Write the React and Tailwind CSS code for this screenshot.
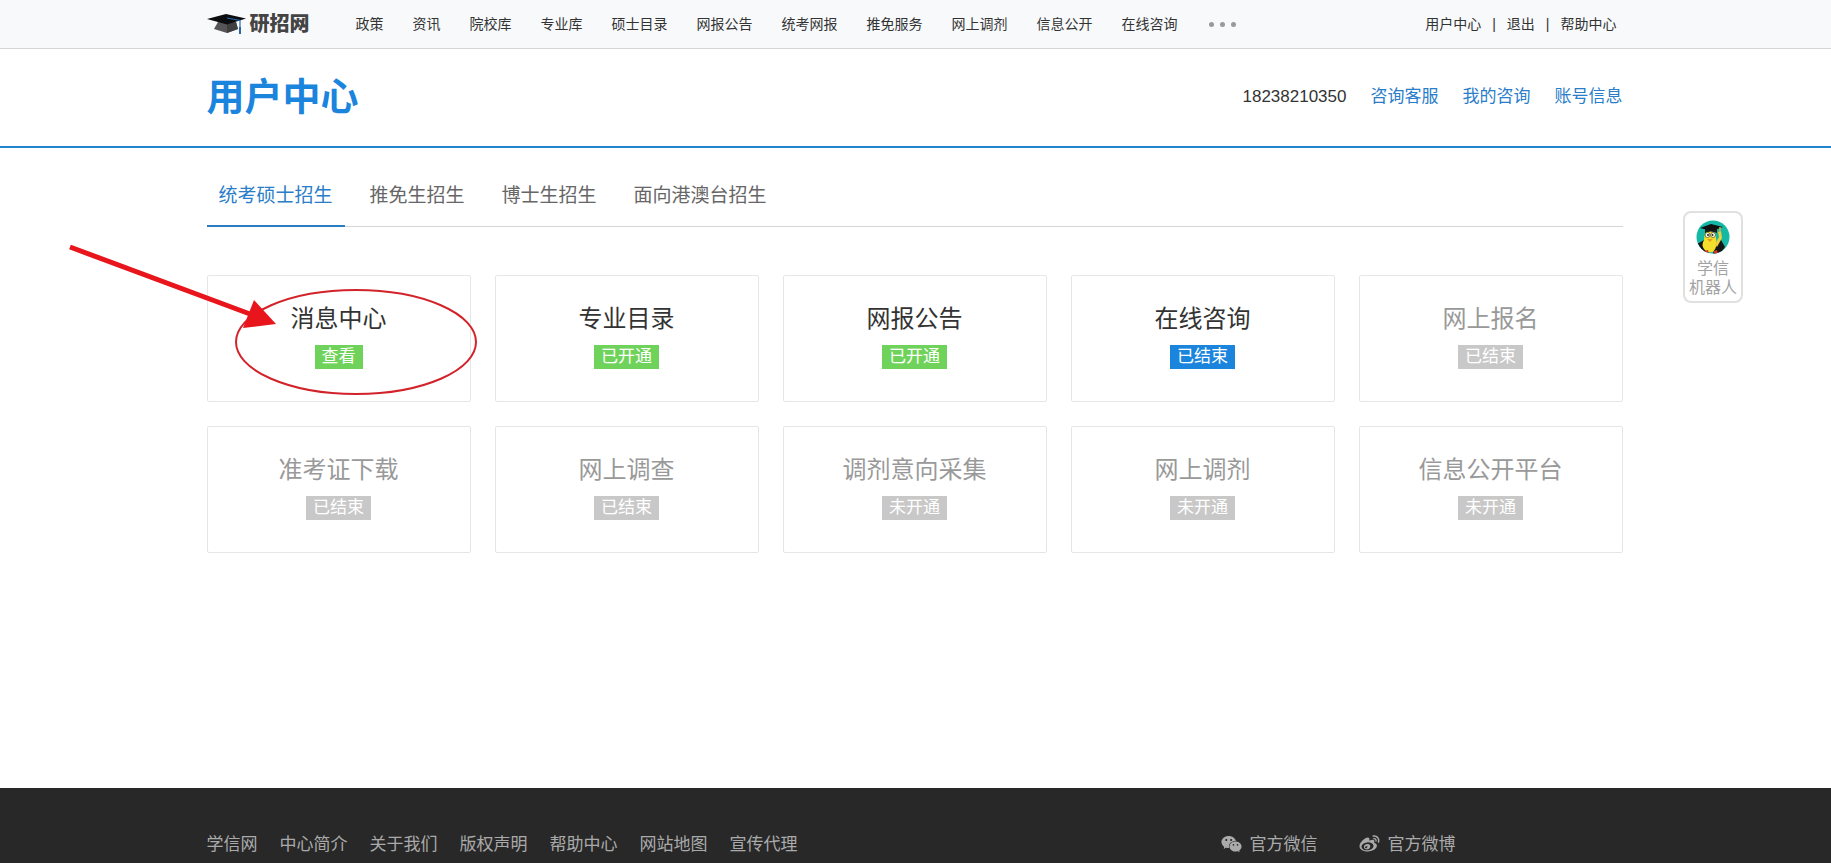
import { AiFillWechat } from "react-icons/ai";
import { FaWeibo } from "react-icons/fa";

const navLinks = [
  "政策",
  "资讯",
  "院校库",
  "专业库",
  "硕士目录",
  "网报公告",
  "统考网报",
  "推免服务",
  "网上调剂",
  "信息公开",
  "在线咨询",
];

const tabs = ["统考硕士招生", "推免生招生", "博士生招生", "面向港澳台招生"];

const cards = [
  { title: "消息中心", status: "查看", tone: "green", marked: true },
  { title: "专业目录", status: "已开通", tone: "green" },
  { title: "网报公告", status: "已开通", tone: "green" },
  { title: "在线咨询", status: "已结束", tone: "blue" },
  { title: "网上报名", status: "已结束", tone: "gray" },
  { title: "准考证下载", status: "已结束", tone: "gray" },
  { title: "网上调查", status: "已结束", tone: "gray" },
  { title: "调剂意向采集", status: "未开通", tone: "gray" },
  { title: "网上调剂", status: "未开通", tone: "gray" },
  { title: "信息公开平台", status: "未开通", tone: "gray" },
];

const footerLinks = [
  "学信网",
  "中心简介",
  "关于我们",
  "版权声明",
  "帮助中心",
  "网站地图",
  "宣传代理",
];

const badgeTone = {
  green: "bg-[#6fd35b]",
  blue: "bg-[#1b84dd]",
  gray: "bg-[#c8c8c8]",
};

function CapIcon() {
  return (
    <svg viewBox="0 0 39 20" className="h-5 w-[39px]" aria-hidden="true">
      <path d="M11 8 L7 15 L20 19 L31 15 L29 8 Z" fill="#555" />
      <path d="M20 10 V19 L31 15 L29 8 Z" fill="#3f3f3f" />
      <path d="M0 5 L19 0 L39 4.500 L20 10.500 Z" fill="#0b0d10" />
      <path d="M20 4 L33 6.500 V18" fill="none" stroke="#2a6cab" strokeWidth="1.200" />
      <path d="M32 13 h2 v7 h-2 z" fill="#2b66a0" />
    </svg>
  );
}

function RobotIcon() {
  return (
    <svg viewBox="0 0 34 34" className="h-[34px] w-[34px]" aria-hidden="true">
      <defs>
        <clipPath id="robot-clip">
          <circle cx="17" cy="17" r="16.500" />
        </clipPath>
      </defs>
      <circle cx="17" cy="17" r="16.500" fill="#14b8a5" />
      <g clipPath="url(#robot-clip)">
        <path d="M1 24 L8 20 L11 34 L3 34 Z M19 22 L25 20 L29 27 L24 34 L17 34 Z" fill="#151515" />
        <path d="M8 20 Q8 11 14 11 Q20 11 20 18 Q22 27 17 32 Q11 33 8 29 Q5 25 8 20 Z" fill="#f4de2c" />
        <path d="M19 24 L23 17 L22 12 L25 11 L26 18 L21 27 Z" fill="#e9d23a" />
        <path d="M9 8 H21 V13 Q15 10 9 13 Z" fill="#1a1a1a" />
        <path d="M4 8 L15 4 L27 7 L16 11 Z" fill="#111" />
        <circle cx="11.500" cy="15" r="2.500" fill="#fff" stroke="#7c7430" />
        <circle cx="17" cy="15" r="2.500" fill="#fff" stroke="#7c7430" />
        <circle cx="12" cy="15" r="1" fill="#222" />
        <circle cx="16.500" cy="15" r="1" fill="#222" />
        <path d="M11 19 L17 19 L14 22 Z" fill="#e89a1c" />
        <path d="M24 7 V12" stroke="#d8b63a" strokeWidth="1.500" />
        <path d="M8 31 L12 30 L13 34 H8 Z M18 31 L21 30 L22 34 H18 Z" fill="#d8342a" />
      </g>
    </svg>
  );
}

// hand drawn style marker: an ellipse round the card text and an arrow to it
function Marker() {
  return (
    <svg
      viewBox="0 0 410 152"
      className="pointer-events-none absolute -top-8 -left-[140px] h-[152px] w-[410px] max-w-none"
      aria-hidden="true"
    >
      <ellipse cx="288" cy="98" rx="120" ry="52" fill="none" stroke="#d3232a" strokeWidth="2" />
      <path d="M2 3 L182 70" stroke="#e8161c" strokeWidth="5" />
      <path d="M186 56 L208 80 L175 84 Z" fill="#e8161c" />
    </svg>
  );
}

function Card({ title, status, tone, marked }) {
  return (
    <div className="relative rounded-xs border border-[#e6e6e6]">
      <a href="#" className="flex h-[125px] flex-col items-center pt-[25px]">
        <span
          className={`text-2xl leading-9 ${tone === "gray" ? "text-[#999]" : "text-[#333]"}`}
        >
          {title}
        </span>
        <span
          className={`mt-2 px-[7px] text-[17px] leading-6 text-white ${badgeTone[tone]}`}
        >
          {status}
        </span>
      </a>
      {marked && <Marker />}
    </div>
  );
}

export default function App() {
  return (
    <div className="relative flex min-h-screen flex-col bg-white font-['Liberation_Sans','Noto_Sans_CJK_SC',sans-serif] font-normal text-[#333]">
      <header className="border-b border-[#d3d6d8] bg-[#f7f9fb]">
        <div className="mx-auto flex h-12 max-w-[1418px] items-center pr-0.5 text-sm">
          <a href="#" className="flex items-center gap-1">
            <CapIcon />
            <span className="font-['Liberation_Serif','Noto_Sans_CJK_SC',serif] text-xl leading-6 font-black text-[#444]">
              研招网
            </span>
          </a>
          <nav className="ml-[46px] flex items-center gap-[29px]">
            {navLinks.map((label) => (
              <a key={label} href="#">
                {label}
              </a>
            ))}
            <button type="button" aria-label="更多" className="ml-0.5 flex gap-1.5">
              <i className="h-[5px] w-[5px] rounded-full bg-[#999]" />
              <i className="h-[5px] w-[5px] rounded-full bg-[#999]" />
              <i className="h-[5px] w-[5px] rounded-full bg-[#999]" />
            </button>
          </nav>
          <div className="mr-1.5 ml-auto flex items-center gap-[11px]">
            <a href="#">用户中心</a>
            <span>|</span>
            <a href="#">退出</a>
            <span>|</span>
            <a href="#">帮助中心</a>
          </div>
        </div>
      </header>

      <div className="border-b-2 border-[#2185d0]">
        <div className="mx-auto flex h-[97px] max-w-[1418px] items-center justify-between pr-0.5 pb-0.5">
          <h1 className="text-[38px] leading-none font-bold text-[#1b84dd]">用户中心</h1>
          <div className="flex items-center gap-6 text-[17px]">
            <span>18238210350</span>
            <a href="#" className="text-[#2a7dc9]">
              咨询客服
            </a>
            <a href="#" className="text-[#2a7dc9]">
              我的咨询
            </a>
            <a href="#" className="text-[#2a7dc9]">
              账号信息
            </a>
          </div>
        </div>
      </div>

      <main className="mx-auto w-full max-w-[1418px] flex-1 pr-0.5">
        <div role="tablist" className="flex gap-[13px] border-b border-[#d5d5d5] pt-4 text-[19px]">
          {tabs.map((label, i) => (
            <button
              key={label}
              type="button"
              role="tab"
              aria-selected={i === 0}
              className={`-mb-px h-[63px] border-b-2 px-3 pt-1 ${
                i === 0 ? "border-[#2a7dc0] text-[#2a7dc9]" : "border-transparent text-[#666]"
              }`}
            >
              {label}
            </button>
          ))}
        </div>
        <div className="mt-12 grid grid-cols-5 gap-6">
          {cards.map((card) => (
            <Card key={card.title} {...card} />
          ))}
        </div>
      </main>

      <footer className="bg-[#282828] text-[17px] text-[#aaa]">
        <div className="mx-auto flex h-[75px] max-w-[1418px] items-end justify-between pr-0.5 pb-1.5">
          <div className="flex gap-[22px]">
            {footerLinks.map((label) => (
              <a key={label} href="#">
                {label}
              </a>
            ))}
          </div>
          <div className="mr-[167px] flex gap-10">
            <a href="#" className="flex items-center gap-[7px]">
              <AiFillWechat className="h-6 w-[23px]" />
              官方微信
            </a>
            <a href="#" className="flex items-center gap-[7px]">
              <FaWeibo className="h-5 w-[23px]" />
              官方微博
            </a>
          </div>
        </div>
      </footer>

      {/* floating assistant */}
      <a
        href="#"
        className="absolute top-[211px] right-[88px] flex w-[60px] flex-col items-center rounded-lg border-2 border-[#e0e0e0] bg-white pt-[7px] pb-1 text-base leading-[19px] text-[#a3a3a3]"
      >
        <RobotIcon />
        <span className="mt-[5px]">学信</span>
        <span>机器人</span>
      </a>
    </div>
  );
}
